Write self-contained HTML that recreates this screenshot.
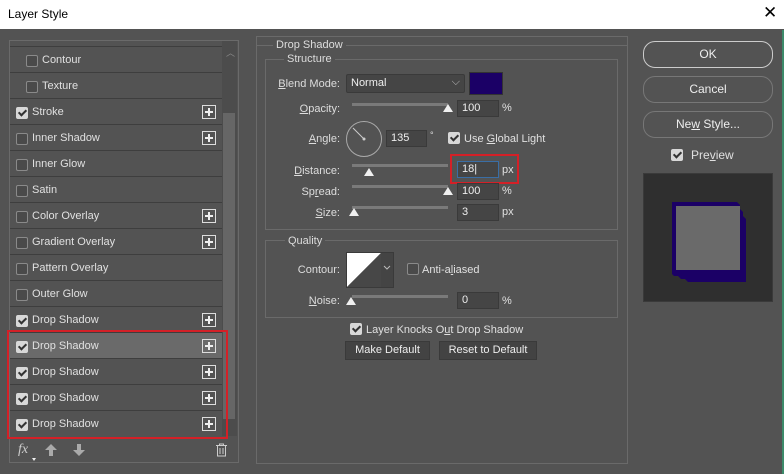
<!DOCTYPE html>
<html><head><meta charset="utf-8"><style>
*{box-sizing:border-box;margin:0;padding:0}
body{width:784px;height:474px;background:#535353;font-family:"Liberation Sans",sans-serif;font-size:11px;color:#e0e0e0;position:relative;overflow:hidden}
.a{position:absolute}
.title{left:0;top:0;width:784px;height:29px;background:#fff;color:#000;font-size:12px}
.row{position:absolute;left:10px;width:212px;height:26px;border-bottom:1px solid #3e3e3e;line-height:27px}
.cb{position:absolute;width:12px;height:12px;border:1px solid #8a8a8a;border-radius:2px;background:#4a4a4a}
.row .cb{top:8px!important}
.cb.on{background:#d8d8d8;border-color:#d8d8d8}
.cb.on::after{content:"";position:absolute;left:3px;top:0px;width:3px;height:6px;border:solid #333;border-width:0 2px 2px 0;transform:rotate(45deg)}
.plus{position:absolute;right:6px;top:6px;width:14px;height:14px;border:1px solid #ddd}
.plus::before{content:"";position:absolute;left:2px;top:5px;width:8px;height:2px;background:#eee}
.plus::after{content:"";position:absolute;left:5px;top:2px;width:2px;height:8px;background:#eee}
.lbl{position:absolute;text-align:right;color:#ddd}
.inp{position:absolute;height:17px;background:#454545;border:1px solid #3a3a3a;padding-left:4px;line-height:15px;color:#eee}
.track{position:absolute;height:3px;background:#7a7a7a}
.thumb{position:absolute;width:0;height:0;border-left:5px solid transparent;border-right:5px solid transparent;border-bottom:8px solid #f0f0f0}
.grp{position:absolute;border:1px solid #6a6a6a}
.gt{position:absolute;background:#535353;padding:0 3px;color:#ddd}
.btn{position:absolute;border:1px solid #9a9a9a;border-radius:12px;text-align:center;color:#eee;font-size:12px}
.sb{position:absolute;background:#434343;border:1px solid #3a3a3a;text-align:center;line-height:17px;color:#eee}
u{text-decoration:underline}
</style></head><body>
<div class="a title"><span class="a" style="left:8px;top:7px">Layer Style</span><span class="a" style="left:763px;top:3px;font-size:17px">✕</span></div>

<div class="a" style="left:9px;top:40px;width:230px;height:423px;border:1px solid #6a6a6a"></div>
<div class="a" style="left:10px;top:46px;width:212px;height:1px;background:#3e3e3e"></div>
<div class="a" style="left:222px;top:41px;width:15px;height:395px;background:#4c4c4c"></div>
<div class="a" style="left:223px;top:113px;width:12px;height:306px;background:#666"></div>
<div class="a" style="left:226px;top:46px;color:#888;font-size:9px">︿</div>

<div class="row" style="top:47px"><span class="cb" style="left:16px;top:7px"></span><span class="a" style="left:32px">Contour</span></div>
<div class="row" style="top:73px"><span class="cb" style="left:16px;top:7px"></span><span class="a" style="left:32px">Texture</span></div>
<div class="row" style="top:99px"><span class="cb on" style="left:6px;top:7px"></span><span class="a" style="left:22px">Stroke</span><span class="plus"></span></div>
<div class="row" style="top:125px"><span class="cb" style="left:6px;top:7px"></span><span class="a" style="left:22px">Inner Shadow</span><span class="plus"></span></div>
<div class="row" style="top:151px"><span class="cb" style="left:6px;top:7px"></span><span class="a" style="left:22px">Inner Glow</span></div>
<div class="row" style="top:177px"><span class="cb" style="left:6px;top:7px"></span><span class="a" style="left:22px">Satin</span></div>
<div class="row" style="top:203px"><span class="cb" style="left:6px;top:7px"></span><span class="a" style="left:22px">Color Overlay</span><span class="plus"></span></div>
<div class="row" style="top:229px"><span class="cb" style="left:6px;top:7px"></span><span class="a" style="left:22px">Gradient Overlay</span><span class="plus"></span></div>
<div class="row" style="top:255px"><span class="cb" style="left:6px;top:7px"></span><span class="a" style="left:22px">Pattern Overlay</span></div>
<div class="row" style="top:281px"><span class="cb" style="left:6px;top:7px"></span><span class="a" style="left:22px">Outer Glow</span></div>
<div class="row" style="top:307px"><span class="cb on" style="left:6px;top:7px"></span><span class="a" style="left:22px">Drop Shadow</span><span class="plus"></span></div>
<div class="row" style="top:333px;background:#6a6a6a"><span class="cb on" style="left:6px;top:7px"></span><span class="a" style="left:22px">Drop Shadow</span><span class="plus"></span></div>
<div class="row" style="top:359px"><span class="cb on" style="left:6px;top:7px"></span><span class="a" style="left:22px">Drop Shadow</span><span class="plus"></span></div>
<div class="row" style="top:385px"><span class="cb on" style="left:6px;top:7px"></span><span class="a" style="left:22px">Drop Shadow</span><span class="plus"></span></div>
<div class="row" style="top:411px;border:0"><span class="cb on" style="left:6px;top:7px"></span><span class="a" style="left:22px">Drop Shadow</span><span class="plus"></span></div>
<div class="a" style="left:7px;top:330px;width:221px;height:109px;border:2px solid #d42027"></div>
<div class="a" style="left:18px;top:442px;font-style:italic;font-size:14px;color:#ccc;font-family:'Liberation Serif',serif">fx</div>
<div class="a" style="left:32px;top:458px;width:0;height:0;border:2px solid transparent;border-top:3px solid #eee"></div>
<svg class="a" style="left:44px;top:444px" width="14" height="12"><path d="M7 0L13 6H9V12H5V6H1Z" fill="#aaa"/></svg>
<svg class="a" style="left:72px;top:444px" width="14" height="12"><path d="M7 12L13 6H9V0H5V6H1Z" fill="#aaa"/></svg>
<svg class="a" style="left:215px;top:443px" width="13" height="14"><path d="M1 2.5H12M4.5 2.5V1H8.5V2.5M2.5 3V13H10.5V3M5 5V11M8 5V11" stroke="#ccc" fill="none"/></svg>

<div class="a" style="left:256px;top:36px;width:372px;height:428px;border:1px solid #6a6a6a"></div>
<div class="a" style="left:256px;top:45px;width:372px;height:1px;background:#6a6a6a"></div>
<div class="gt" style="left:273px;top:39px">Drop Shadow</div>
<div class="grp" style="left:265px;top:59px;width:353px;height:171px"></div>
<div class="gt" style="left:284px;top:53px">Structure</div>

<div class="lbl" style="left:270px;top:78px;width:70px"><u>B</u>lend Mode:</div>
<div class="inp" style="left:346px;top:74px;width:119px;height:19px;line-height:17px;border-radius:2px">Normal<span class="a" style="right:4px;top:-1px;color:#bbb">⌵</span></div>
<div class="a" style="left:469px;top:72px;width:34px;height:23px;background:#1b0066;border:1px solid #333"></div>

<div class="lbl" style="left:270px;top:103px;width:70px"><u>O</u>pacity:</div>
<div class="track" style="left:352px;top:103px;width:96px"></div>
<div class="thumb" style="left:443px;top:104px"></div>
<div class="inp" style="left:457px;top:100px;width:42px">100</div><span class="a" style="left:502px;top:102px">%</span>

<div class="lbl" style="left:270px;top:133px;width:70px"><u>A</u>ngle:</div>
<svg class="a" style="left:345px;top:120px" width="38" height="38"><circle cx="19" cy="19" r="17.5" stroke="#aaa" fill="none"/><path d="M19 19L8 8" stroke="#ccc"/><circle cx="19" cy="19" r="1.5" fill="#ccc"/></svg>
<div class="inp" style="left:386px;top:130px;width:41px">135</div><span class="a" style="left:430px;top:130px;font-size:9px">°</span>
<span class="cb on" style="left:448px;top:132px"></span><span class="a" style="left:464px;top:133px">Use <u>G</u>lobal Light</span>

<div class="lbl" style="left:270px;top:165px;width:70px"><u>D</u>istance:</div>
<div class="track" style="left:352px;top:164px;width:96px"></div>
<div class="thumb" style="left:364px;top:168px"></div>
<div class="inp" style="left:457px;top:161px;width:42px;border-color:#3a6ea5">18|</div><span class="a" style="left:502px;top:164px">px</span>
<div class="a" style="left:450px;top:154px;width:69px;height:30px;border:2px solid #d42027"></div>

<div class="lbl" style="left:270px;top:186px;width:70px">Sp<u>r</u>ead:</div>
<div class="track" style="left:352px;top:185px;width:96px"></div>
<div class="thumb" style="left:443px;top:187px"></div>
<div class="inp" style="left:457px;top:183px;width:42px">100</div><span class="a" style="left:502px;top:185px">%</span>

<div class="lbl" style="left:270px;top:207px;width:70px"><u>S</u>ize:</div>
<div class="track" style="left:352px;top:206px;width:96px"></div>
<div class="thumb" style="left:349px;top:208px"></div>
<div class="inp" style="left:457px;top:204px;width:42px">3</div><span class="a" style="left:502px;top:206px">px</span>

<div class="grp" style="left:265px;top:240px;width:353px;height:78px"></div>
<div class="gt" style="left:285px;top:235px">Quality</div>
<div class="lbl" style="left:270px;top:264px;width:70px">Contour:</div>
<svg class="a" style="left:346px;top:252px" width="48" height="36"><rect x="0.5" y="0.5" width="47" height="35" fill="#444" stroke="#3a3a3a"/><path d="M1 1H35L1 35Z" fill="#fff"/><path d="M35 1L1 35H35Z" fill="#474747"/><path d="M38 14l3 3 3-3" stroke="#bbb" fill="none"/></svg>
<span class="cb" style="left:407px;top:263px"></span><span class="a" style="left:422px;top:264px">Anti-a<u>l</u>iased</span>
<div class="lbl" style="left:270px;top:295px;width:70px"><u>N</u>oise:</div>
<div class="track" style="left:352px;top:295px;width:96px"></div>
<div class="thumb" style="left:346px;top:297px"></div>
<div class="inp" style="left:457px;top:292px;width:42px">0</div><span class="a" style="left:502px;top:295px">%</span>

<span class="cb on" style="left:350px;top:323px"></span><span class="a" style="left:366px;top:324px">Layer Knocks O<u>u</u>t Drop Shadow</span>
<div class="sb" style="left:345px;top:341px;width:85px;height:19px">Make Default</div>
<div class="sb" style="left:439px;top:341px;width:98px;height:19px">Reset to Default</div>

<div class="btn" style="left:643px;top:41px;width:130px;height:27px;line-height:25px;border-color:#ccc">OK</div>
<div class="btn" style="left:643px;top:76px;width:130px;height:27px;line-height:25px;border-color:#777">Cancel</div>
<div class="btn" style="left:643px;top:111px;width:130px;height:27px;line-height:25px;border-color:#777">Ne<u>w</u> Style...</div>
<span class="cb on" style="left:671px;top:149px"></span><span class="a" style="left:691px;top:148px;font-size:12px">Pre<u>v</u>iew</span>
<div class="a" style="left:643px;top:173px;width:130px;height:129px;background:#2f2f2f;border:1px solid #3a3a3a"></div>
<svg class="a" style="left:670px;top:200px" width="86" height="86"><path d="M2 2H67L70 5V9L73 12V16L76 19V82H18L15 79H11L8 76H4L2 74Z" fill="#1b0066"/><rect x="6" y="6" width="64" height="64" fill="#6a6a6a"/></svg>
<div class="a" style="left:782px;top:30px;width:2px;height:444px;background:#3c8a6a"></div>
</body></html>
